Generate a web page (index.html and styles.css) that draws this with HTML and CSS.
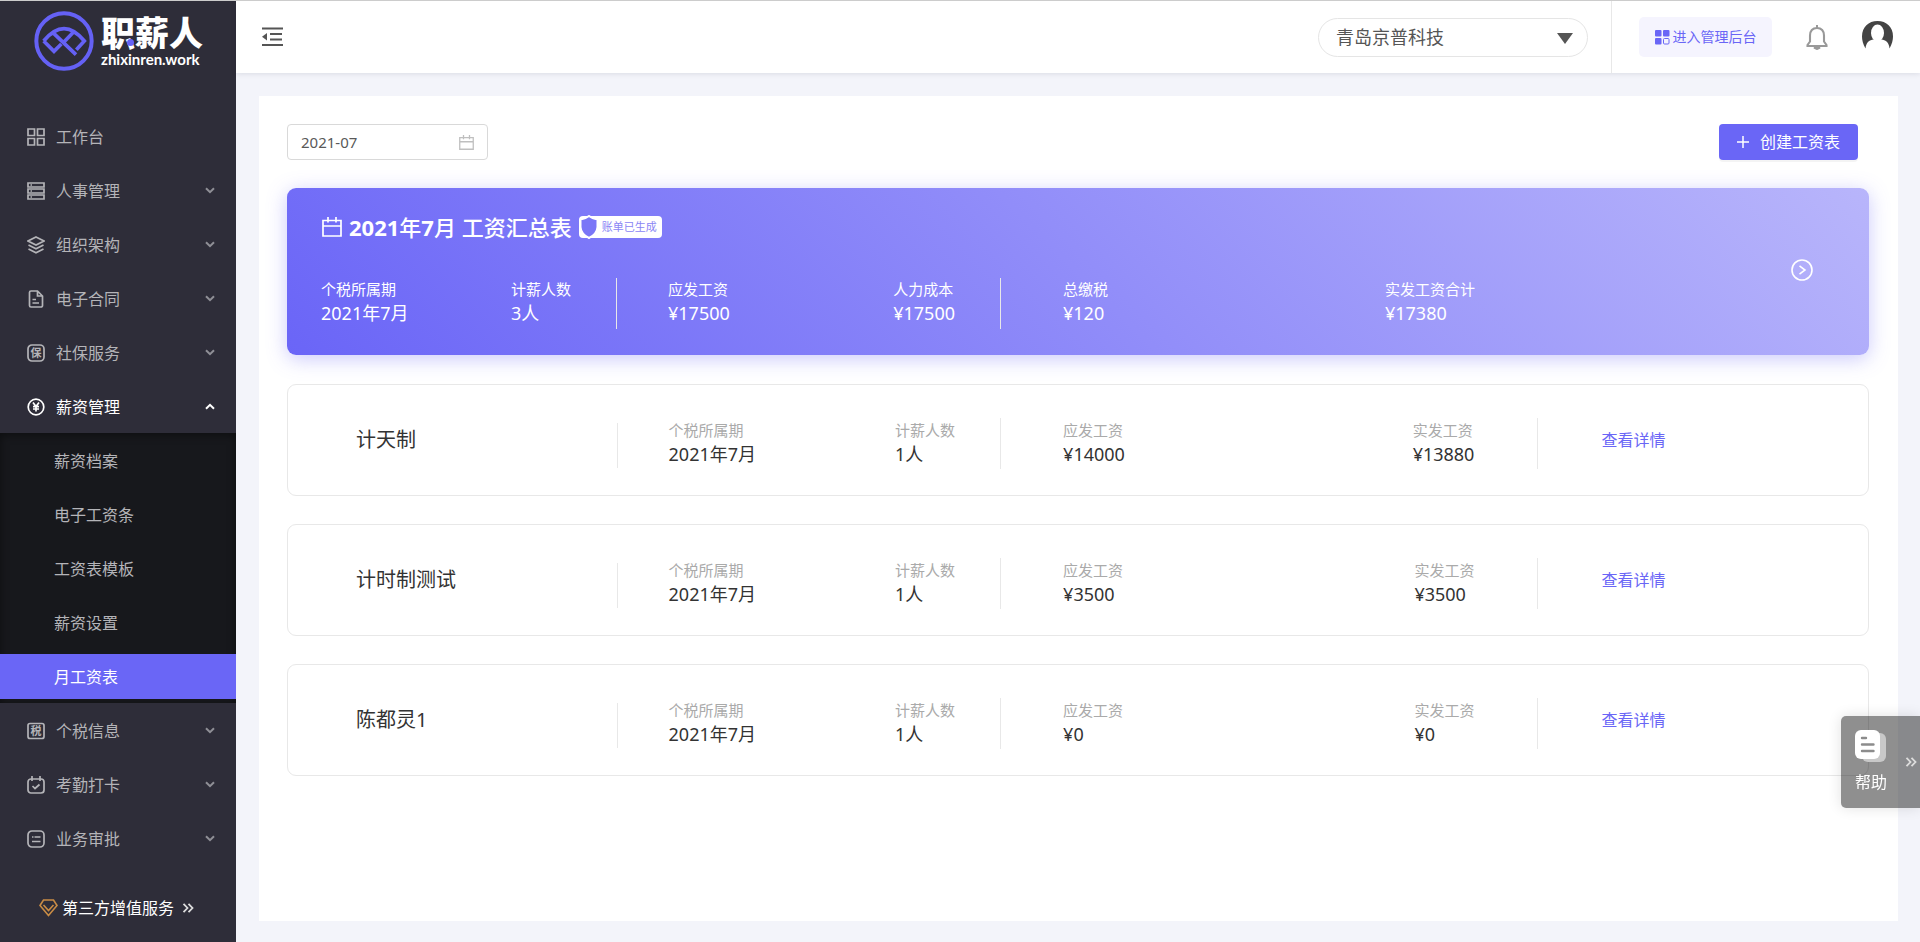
FILE: index.html
```html
<!DOCTYPE html>
<html lang="zh-CN">
<head>
<meta charset="utf-8">
<title>月工资表 - 职薪人</title>
<link rel="stylesheet" href="styles.css">
</head>
<body>
<svg class="defs" aria-hidden="true">
  <symbol id="chevron" viewBox="0 0 10 7"><path d="M1 1.2 5 5.2 9 1.2" fill="none" stroke="currentColor" stroke-width="2"/></symbol>
  <symbol id="double" viewBox="0 0 12 10"><path d="M1.5 .8 5.5 5 1.5 9.2M6.5 .8 10.5 5 6.5 9.2" fill="none" stroke="currentColor" stroke-width="1.8"/></symbol>
  <symbol id="calendar" viewBox="0 0 20 20"><path d="M1 3.5H19V19H1ZM1 9H19M6 0V5.5M14 0V5.5" fill="none" stroke="currentColor" stroke-width="1.7"/></symbol>
</svg>
<aside class="sidebar">
  <a class="logo" href="#">
    <svg class="emblem" viewBox="0 0 180 180" fill="none" stroke="#6561f5" stroke-width="12"><circle cx="90" cy="90" r="83"/><path d="M29 90Q90 16 151 90L127 116M29 90 60 121 82 99M56 64 126 131M118 64 92 91" stroke-width="11"/></svg>
    <span class="wordmark"><span class="brand">职薪人</span><span class="domain">zhixinren.work</span></span>
  </a>
  <nav class="menu">
    <a class="item" href="#"><svg class="icon" viewBox="0 0 18 18"><path d="M1 1H7.5V7.5H1ZM10.500 1H17V7.500H10.500ZM1 10.500H7.500V17H1ZM10.500 10.500H17V17H10.500Z"/></svg><span>工作台</span></a>
    <a class="item" href="#"><svg class="icon" viewBox="0 0 18 18"><path d="M1 1H17V5H1ZM1 7H17V11H1ZM1 13H17V17H1ZM3.500 3H5M3.500 9H5M3.500 15H5"/></svg><span>人事管理</span><svg class="chevron"><use href="#chevron"/></svg></a>
    <a class="item" href="#"><svg class="icon" viewBox="0 0 18 18"><path d="M9 1 17 5 9 9 1 5ZM1.500 9 9 12.800 16.500 9M1.500 13 9 16.800 16.500 13"/></svg><span>组织架构</span><svg class="chevron"><use href="#chevron"/></svg></a>
    <a class="item" href="#"><svg class="icon" viewBox="0 0 18 18"><path d="M4 1H10.500L15.500 6V15.500A1.500 1.500 0 0 1 14 17H4A1.500 1.500 0 0 1 2.500 15.500V2.500A1.500 1.500 0 0 1 4 1ZM10.500 1V6H15.500M5.500 9.500H9M5.500 13H12"/></svg><span>电子合同</span><svg class="chevron"><use href="#chevron"/></svg></a>
    <a class="item" href="#"><svg class="icon" viewBox="0 0 18 18"><rect x="1" y="1" width="16" height="16" rx="4"/><text x="9" y="13">保</text></svg><span>社保服务</span><svg class="chevron"><use href="#chevron"/></svg></a>
    <a class="item open" href="#"><svg class="icon" viewBox="0 0 18 18"><circle cx="9" cy="9" r="7.800"/><path d="M6 4.500 9 8.500 12 4.500M9 8.500V13.500M6 8.700H12M6 11H12"/></svg><span>薪资管理</span><svg class="chevron"><use href="#chevron"/></svg></a>
    <div class="submenu">
      <a href="#">薪资档案</a>
      <a href="#">电子工资条</a>
      <a href="#">工资表模板</a>
      <a href="#">薪资设置</a>
      <a class="active" href="#">月工资表</a>
    </div>
    <a class="item" href="#"><svg class="icon" viewBox="0 0 18 18"><rect x="1" y="1.500" width="16" height="15" rx="2"/><text x="9" y="13">税</text></svg><span>个税信息</span><svg class="chevron"><use href="#chevron"/></svg></a>
    <a class="item" href="#"><svg class="icon" viewBox="0 0 18 18"><rect x="1" y="3" width="16" height="14" rx="3"/><path d="M5 0V5M13 0V5M5.500 10 8 12.500 12.500 8.500"/></svg><span>考勤打卡</span><svg class="chevron"><use href="#chevron"/></svg></a>
    <a class="item" href="#"><svg class="icon" viewBox="0 0 18 18"><rect x="1" y="1" width="16" height="16" rx="4"/><path d="M5 7H6.500M7.500 7H13.500M5 11.500H13.500"/></svg><span>业务审批</span><svg class="chevron"><use href="#chevron"/></svg></a>
  </nav>
  <a class="services" href="#">
    <svg class="gem" viewBox="0 0 19 18" fill="none" stroke="#c98c45" stroke-width="1.600"><path d="M4.500 1H14.500L18 6.500 9.500 16.500 1 6.500ZM4.500 6 9.500 11.500 14.500 6"/></svg>
    <span>第三方增值服务</span>
    <svg class="double"><use href="#double"/></svg>
  </a>
</aside>
<div class="page">
  <header class="topbar">
    <button class="fold" type="button" aria-label="收起菜单"><svg viewBox="0 0 21 20" fill="none" stroke="#555" stroke-width="2"><path d="M0 1.500H21M8 7H20M8 12.500H20M0 18H21"/><path d="M5 6V13.500L0 9.700Z" fill="#555" stroke="none"/></svg></button>
    <div class="company">
      <select aria-label="公司"><option>青岛京普科技</option></select>
      <svg class="caret" viewBox="0 0 16 11"><path d="M0 0H16L8 11Z" fill="#555"/></svg>
    </div>
    <div class="account">
      <button class="admin" type="button"><svg viewBox="0 0 15 15" fill="#6a66f6"><rect width="6.500" height="6.500" rx="1"/><rect x="8" width="6.500" height="6.500" rx="1"/><rect y="8" width="6.500" height="6.500" rx="1"/><rect x="8.500" y="8.500" width="5.500" height="5.500" rx="1" fill="none" stroke="#6a66f6"/></svg>进入管理后台</button>
      <button class="bell" type="button" aria-label="通知"><svg viewBox="0 0 22 25" fill="none" stroke="#999" stroke-width="2.100"><path d="M11 3C6.500 3 4 6 4 10.500V16.500L1.500 20V21H20.500V20L18 16.500V10.500C18 6 15.500 3 11 3Z"/><path d="M11 0V3M8 22.500H14L11 24Z" stroke-width="2"/></svg></button>
      <button class="avatar" type="button" aria-label="账户"><svg viewBox="0 0 31 28"><path d="M3.500 27.500C1 23 0 19 0 15.500 0 6 6.500 0 15.500 0S31 6 31 15.500C31 19 30 23 27.500 27.500 27 22 24.500 19.500 20 18.500H11C6.500 19.500 4 22 3.500 27.500Z" fill="#444"/><ellipse cx="15.500" cy="12" rx="6.500" ry="8.500" fill="#fff"/></svg></button>
    </div>
  </header>
  <main class="content">
    <section class="panel">
      <div class="toolbar">
        <label class="month"><input type="text" value="2021-07" aria-label="月份"><svg><use href="#calendar"/></svg></label>
        <button class="create" type="button"><svg viewBox="0 0 12 12"><path d="M6 0V12M0 6H12" stroke="#fff" stroke-width="1.500"/></svg>创建工资表</button>
      </div>
      <section class="summary">
        <h1 class="title">
          <svg class="title-icon"><use href="#calendar"/></svg>
          <span><b>2021</b>年<b>7</b>月 工资汇总表</span>
          <span class="badge"><svg viewBox="0 0 20 24"><path d="M10 1Q13 3.500 18.500 4.500V12Q18 19 10 23 2 19 1.500 12V4.500Q7 3.500 10 1Z" fill="#7a76f7" stroke="#fff" stroke-width="2"/></svg>账单已生成</span>
        </h1>
        <dl class="group first">
          <div><dt>个税所属期</dt><dd>2021年7月</dd></div>
          <div><dt>计薪人数</dt><dd>3人</dd></div>
        </dl>
        <dl class="group">
          <div><dt>应发工资</dt><dd>¥17500</dd></div>
          <div><dt>人力成本</dt><dd>¥17500</dd></div>
        </dl>
        <dl class="group last">
          <div><dt>总缴税</dt><dd>¥120</dd></div>
          <div><dt>实发工资合计</dt><dd>¥17380</dd></div>
        </dl>
        <a class="go" href="#" aria-label="查看汇总"><svg viewBox="0 0 22 22" fill="none" stroke="#fff" stroke-width="1.600"><circle cx="11" cy="11" r="10"/><path d="M8.500 6.800 14 11 8.500 15.200"/></svg></a>
      </section>
      <article class="sheet">
        <h2>计天制</h2>
        <dl class="group">
          <div><dt>个税所属期</dt><dd>2021年7月</dd></div>
          <div><dt>计薪人数</dt><dd>1人</dd></div>
        </dl>
        <dl class="group last">
          <div><dt>应发工资</dt><dd>¥14000</dd></div>
          <div><dt>实发工资</dt><dd>¥13880</dd></div>
        </dl>
        <a class="detail" href="#">查看详情</a>
      </article>
      <article class="sheet">
        <h2>计时制测试</h2>
        <dl class="group">
          <div><dt>个税所属期</dt><dd>2021年7月</dd></div>
          <div><dt>计薪人数</dt><dd>1人</dd></div>
        </dl>
        <dl class="group last">
          <div><dt>应发工资</dt><dd>¥3500</dd></div>
          <div><dt>实发工资</dt><dd>¥3500</dd></div>
        </dl>
        <a class="detail" href="#">查看详情</a>
      </article>
      <article class="sheet">
        <h2>陈都灵1</h2>
        <dl class="group">
          <div><dt>个税所属期</dt><dd>2021年7月</dd></div>
          <div><dt>计薪人数</dt><dd>1人</dd></div>
        </dl>
        <dl class="group last">
          <div><dt>应发工资</dt><dd>¥0</dd></div>
          <div><dt>实发工资</dt><dd>¥0</dd></div>
        </dl>
        <a class="detail" href="#">查看详情</a>
      </article>
    </section>
  </main>
</div>
<button class="help" type="button">
  <span class="help-main"><svg viewBox="0 0 31 32"><rect x="7" y="3" width="24" height="29" rx="6" fill="#c8c8c8"/><rect width="25" height="29" rx="6" fill="#fff"/><path d="M7 8H11M7 14.500H18.500M7 21H18.500" stroke="#8c8c8c" stroke-width="2.400" stroke-linecap="round"/></svg>帮助</span>
  <svg class="double"><use href="#double"/></svg>
</button>
</body>
</html>
```
FILE: styles.css
```css
* { box-sizing: border-box; }

body {
  display: flex;
  min-height: 100vh;
  margin: 0;
  border-top: 1px solid #ccc;
  background: #f3f4fa;
  color: #333;
  font: 16px/24px "Noto Sans", "Noto Sans CJK SC", sans-serif;
}

a { color: inherit; text-decoration: none; }
button, input, select { font: inherit; color: inherit; }
button { padding: 0; border: 0; background: none; cursor: pointer; }
svg { display: block; flex: none; }
h1, h2, dl, dd { margin: 0; font-weight: 400; }
.defs { position: absolute; width: 0; height: 0; }

/* Sidebar */
.sidebar {
  display: flex;
  flex: none;
  flex-direction: column;
  width: 236px;
  background: #2e2d39;
  color: #b4b4b8;
}
.logo {
  display: flex;
  align-items: center;
  gap: 7px;
  height: 72px;
  margin: 4px 0 32px;
  padding-left: 34px;
  color: #fff;
}
.emblem { width: 60px; height: 60px; }
.wordmark { display: flex; flex-direction: column; }
.brand { position: relative; font-size: 34px; font-weight: 900; line-height: 36px; }
.brand::after {
  position: absolute;
  bottom: 5px;
  left: 26px;
  width: 7px;
  height: 7px;
  border-radius: 50%;
  background: #6561f5;
  content: "";
}
.domain { font: 700 15px/16px Lato, sans-serif; }
.item {
  display: flex;
  align-items: center;
  gap: 11px;
  height: 45px;
  margin: 5px 0 9px;
  padding: 0 21px 0 27px;
}
.item + .item { margin-top: 0; }
.item.open { margin-bottom: 4px; color: #fff; }
.icon { width: 18px; height: 18px; fill: none; stroke: currentColor; stroke-width: 1.7; }
.icon text {
  fill: currentColor;
  stroke: none;
  font-size: 11px;
  font-weight: 700;
  text-anchor: middle;
}
.chevron { width: 10px; height: 7px; margin-left: auto; color: #8f8f96; }
.open .chevron { color: #fff; transform: rotate(180deg); }
.submenu {
  display: grid;
  gap: 9px;
  padding: 5px 0 4px;
  background: #17181c;
  box-shadow: inset 0 2px 8px rgba(0, 0, 0, .45);
}
.submenu a { height: 45px; padding-left: 54px; line-height: 47px; }
.submenu .active { background: #6a66f6; color: #fff; }
.services {
  display: flex;
  align-items: center;
  gap: 4px;
  margin-top: auto;
  padding: 0 0 22px 39px;
  color: #fff;
}
.gem { width: 19px; height: 18px; }
.double { width: 12px; height: 10px; }
.services .double { margin-left: 4px; color: #ddd; }

/* Top bar */
.page { display: flex; flex: 1; flex-direction: column; min-width: 0; }
.topbar {
  display: flex;
  align-items: center;
  height: 72px;
  padding-left: 26px;
  background: #fff;
  box-shadow: 0 1px 5px rgba(0, 21, 41, .1);
}
.fold svg { width: 21px; height: 20px; }
.company { position: relative; width: 270px; margin-left: auto; }
.company select {
  width: 100%;
  height: 39px;
  padding: 0 40px 0 17px;
  border: 1px solid #e5e5e5;
  border-radius: 20px;
  background: #fff;
  color: #555;
  font-size: 18px;
  appearance: none;
}
.caret { position: absolute; top: 15px; right: 15px; width: 16px; height: 11px; pointer-events: none; }
.account {
  display: flex;
  align-items: center;
  align-self: stretch;
  margin-left: 23px;
  padding: 0 27px;
  border-left: 1px solid #e8e8e8;
}
.admin {
  display: flex;
  align-items: center;
  justify-content: center;
  gap: 3px;
  width: 133px;
  height: 40px;
  border-radius: 5px;
  background: #f5f4fe;
  color: #6a66f6;
  font-size: 14px;
}
.admin svg { width: 15px; height: 15px; }
.bell { margin: 0 34px; }
.bell svg { width: 22px; height: 25px; }
.avatar { padding-bottom: 4px; }
.avatar svg { width: 31px; height: 28px; }

/* Panel */
.content { display: flex; flex: 1; padding: 23px 22px 21px 23px; }
.panel {
  display: flex;
  flex: 1;
  flex-direction: column;
  gap: 28px;
  min-width: 0;
  padding: 28px 29px 28px 28px;
  background: #fff;
}
.toolbar { display: flex; justify-content: space-between; padding-right: 11px; }
.month {
  display: flex;
  align-items: center;
  width: 201px;
  height: 36px;
  padding: 0 13px;
  border: 1px solid #d9d9d9;
  border-radius: 4px;
}
.month input { flex: 1; min-width: 0; padding: 0; border: 0; outline: 0; color: #595959; font-size: 15px; }
.month svg { width: 15px; height: 15px; color: #bfbfbf; }
.create {
  display: flex;
  align-items: center;
  justify-content: center;
  gap: 11px;
  width: 139px;
  height: 36px;
  border-radius: 4px;
  background: #6a66f6;
  box-shadow: 0 2px 0 rgba(0, 0, 0, .045);
  color: #fff;
}
.create svg { width: 12px; height: 12px; }

.summary, .sheet {
  display: grid;
  grid-template-columns: 330fr 384fr 538fr 330fr;
  border-radius: 9px;
}
.summary {
  grid-template-rows: 32px 50px;
  row-gap: 35px;
  margin-bottom: 1px;
  padding: 23px 0 27px;
  background: linear-gradient(45deg, #6a65f7, #b8b5fb);
  box-shadow: 0 4px 20px rgba(106, 102, 246, .35);
  color: #fff;
}
.title {
  display: flex;
  grid-column: 1 / 4;
  align-items: center;
  gap: 7px;
  padding-left: 35px;
  font-size: 22px;
  font-weight: 500;
  line-height: 32px;
}
.title b { font-weight: 700; }
.title-icon { width: 20px; height: 20px; }
.badge {
  display: flex;
  align-items: center;
  gap: 3px;
  height: 22px;
  padding-right: 5px;
  border-radius: 4px;
  background: #fff;
  color: #8a86f5;
  font-size: 11px;
  font-weight: 400;
}
.badge svg { width: 20px; height: 24px; }
.group {
  display: flex;
  justify-content: space-between;
  height: 51px;
  padding: 1px 45px 0 51px;
  border-right: 1px solid #e8e8e8;
}
.group.first { padding-left: 34px; }
.group.last { padding-right: 63px; padding-left: 62px; }
.summary .group { padding-top: 0; }
.summary .group.last { border-color: transparent; }
dt { font-size: 15px; line-height: 23px; }
dd { font-size: 18px; line-height: 24px; }
.go { display: flex; grid-row: 1 / 3; grid-column: 4; align-items: center; justify-content: flex-end; padding-right: 56px; }
.go svg { width: 22px; height: 22px; }

.sheet { padding: 33px 0 26px; border: 1px solid #e8e8e8; }
.sheet h2 {
  height: 45px;
  margin-top: 5px;
  padding-left: 68px;
  border-right: 1px solid #e8e8e8;
  font-size: 20px;
  line-height: 34px;
}
.sheet dt { color: #aaa; }
.detail { padding-left: 63px; color: #6a66f6; line-height: 44px; }

/* Help tab docked to the window edge */
.help {
  position: fixed;
  top: 716px;
  right: 0;
  display: flex;
  align-items: center;
  gap: 18px;
  height: 92px;
  padding: 0 3px 0 14px;
  border-radius: 5px 0 0 5px;
  background: rgba(0, 0, 0, .44);
  box-shadow: 0 0 14px rgba(0, 0, 0, .12);
  color: #fff;
}
.help-main { display: grid; gap: 8px; }
.help-main svg { width: 31px; height: 32px; }
.help .double { color: #ddd; }
```
